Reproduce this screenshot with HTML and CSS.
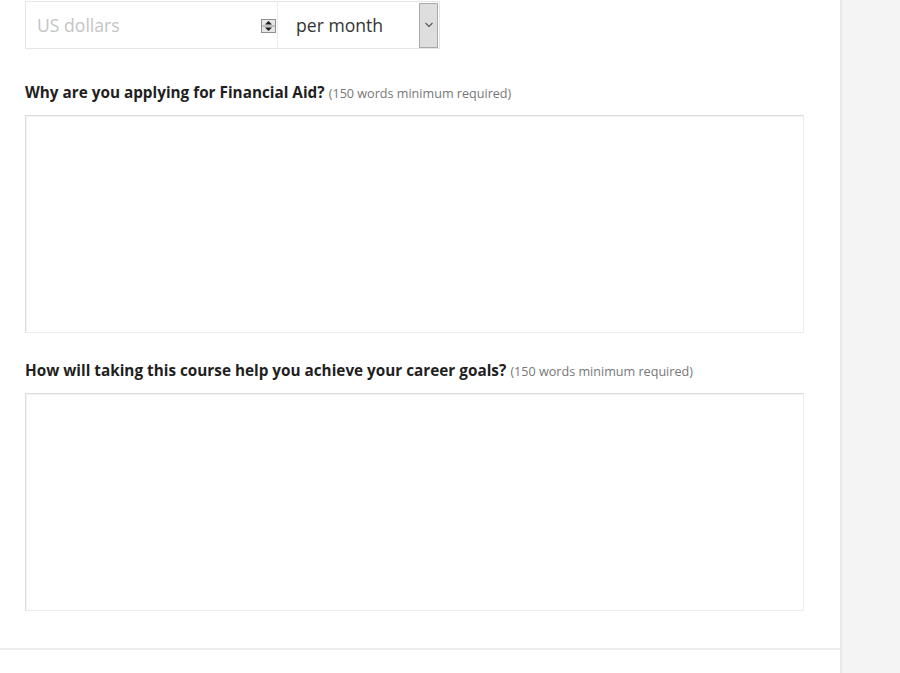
FILE: index.html
```html
<!DOCTYPE html>
<html lang="en">
<head>
<meta charset="utf-8">
<title>Financial Aid</title>
<link rel="stylesheet" href="styles.css">
</head>
<body>
<div class="page">
  <main class="main">
    <div class="form">
      <div class="income-row">
        <div class="amount">
          <span class="placeholder">US dollars</span>
          <span class="spinner">
            <svg width="15" height="14" viewBox="0 0 15 14">
              <rect x="0.5" y="0.5" width="14" height="13" fill="#e6e6e6" stroke="#8f8f8f"/>
              <line x1="1" y1="7" x2="14" y2="7" stroke="#9a9a9a"/>
              <path d="M4 5.5 L7.5 2 L11 5.5 Z" fill="#1a1a1a"/>
              <path d="M4 8.5 L7.5 12 L11 8.5 Z" fill="#1a1a1a"/>
            </svg>
          </span>
        </div>
        <div class="period">
          <span class="period-text">per month</span>
          <span class="dropdown">
            <svg width="10" height="6" viewBox="0 0 10 6"><path d="M1.5 1 L5 4.5 L8.5 1" fill="none" stroke="#555" stroke-width="1.1"/></svg>
          </span>
        </div>
      </div>

      <div class="field field-first">
        <div class="label"><strong>Why are you applying for Financial Aid?</strong> <span class="hint">(150 words minimum required)</span></div>
        <div class="textarea"></div>
      </div>

      <div class="field">
        <div class="label"><strong>How will taking this course help you achieve your career goals?</strong> <span class="hint">(150 words minimum required)</span></div>
        <div class="textarea"></div>
      </div>
    </div>
    <div class="footer-line"></div>
  </main>
  <aside class="side"></aside>
</div>
</body>
</html>
```

FILE: styles.css
```css
html, body {
  margin: 0;
  padding: 0;
  background: #ffffff;
  font-family: "Open Sans", "Liberation Sans", sans-serif;
  color: #222;
}

.page {
  display: flex;
  height: 673px;
  overflow: hidden;
}

.main {
  width: 840px;
  flex: none;
  background: #fff;
  display: flex;
  flex-direction: column;
}

.form {
  padding: 1px 36px 0 25px;
}

.income-row {
  display: flex;
  height: 48px;
}

.amount {
  width: 253px;
  box-sizing: border-box;
  border: 1px solid #e6e6e6;
  border-right-color: #ededed;
  display: flex;
  align-items: center;
  justify-content: space-between;
  padding: 0 1px 0 11px;
}

.placeholder {
  font-size: 17.6px;
  color: #c4c4c4;
  margin-top: -1px;
}

.spinner {
  display: flex;
  margin-top: 1px;
}

.period {
  width: 162px;
  box-sizing: border-box;
  border: 1px solid #e6e6e6;
  border-left: none;
  display: flex;
  align-items: center;
  justify-content: space-between;
  padding: 0 1px 0 18px;
}

.period-text {
  font-size: 17.6px;
  color: #333;
  margin-top: -1px;
}

.dropdown {
  width: 19px;
  height: 45px;
  box-sizing: border-box;
  background: #dedede;
  border: 1px solid #a9a9a9;
  display: flex;
  align-items: center;
  justify-content: center;
}

.field {
  margin-top: 28px;
}

.field-first {
  margin-top: 34px;
}

.label {
  height: 18px;
  line-height: 18px;
  padding-bottom: 2px;
  margin-bottom: 12px;
  white-space: nowrap;
}

.label strong {
  font-size: 15.3px;
  font-weight: 700;
  color: #1f1f1f;
}

.hint {
  font-size: 12.6px;
  color: #777;
}

.textarea {
  width: 779px;
  height: 218px;
  box-sizing: border-box;
  border: 1px solid #ececec;
  border-top-color: #dcdcdc;
  border-left-color: #dcdcdc;
  box-shadow: inset 1px 1px 1px rgba(0, 0, 0, 0.05);
}

.footer-line {
  margin-top: 37px;
  height: 2px;
  background: #ededed;
}

.side {
  flex: 1;
  background: #f4f4f4;
  border-left: 2px solid #e8e8e8;
}
```
